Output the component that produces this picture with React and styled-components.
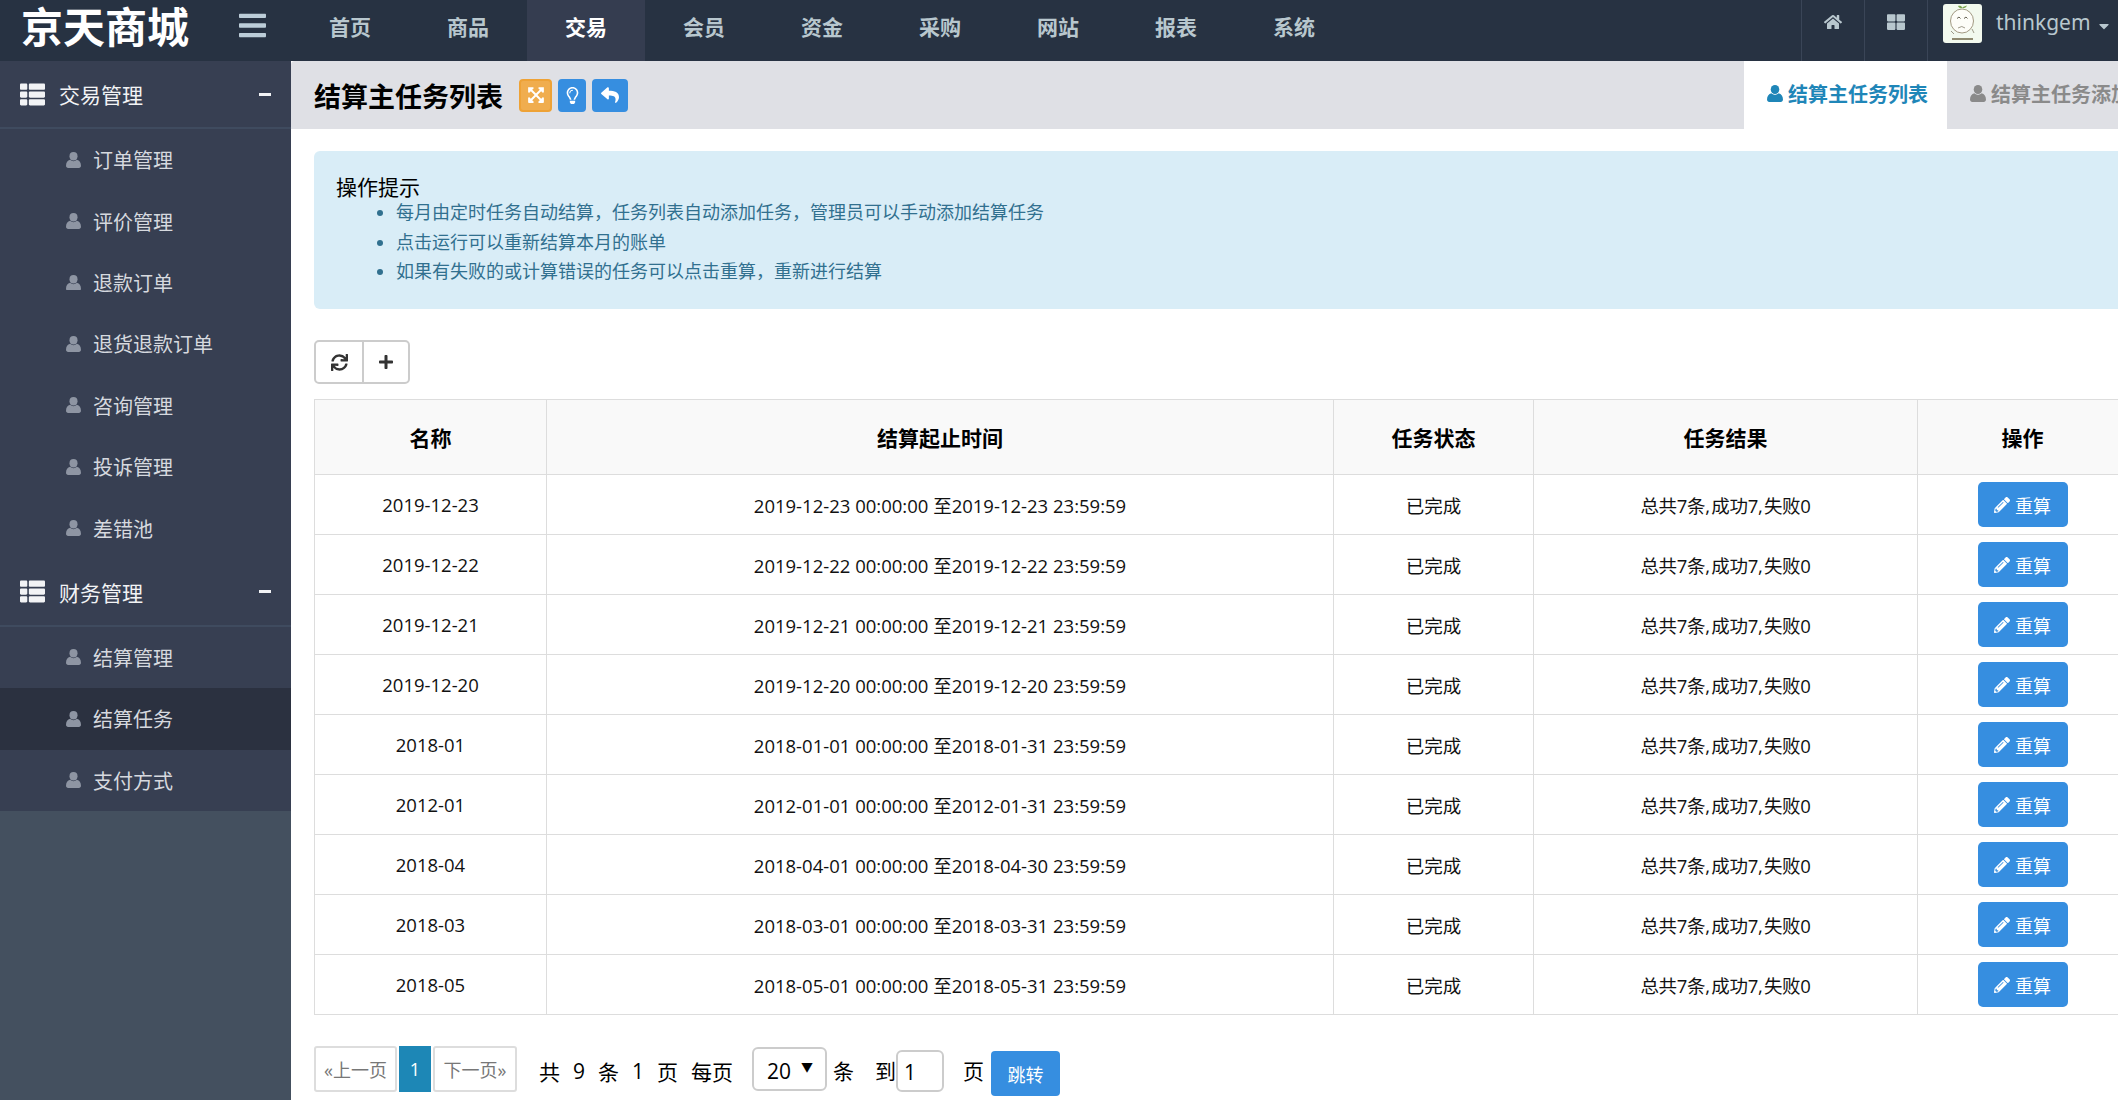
import React from "react";
import styled, { createGlobalStyle } from "styled-components";
import {
    FaBars,
    FaCaretDown,
    FaExpandArrowsAlt,
    FaHome,
    FaPencilAlt,
    FaPlus,
    FaRegLightbulb,
    FaReply,
    FaSync,
    FaThLarge,
    FaThList,
} from "react-icons/fa";

const navItems = ["首页", "商品", "交易", "会员", "资金", "采购", "网站", "报表", "系统"];

const menuGroups = [
    {
        title: "交易管理",
        items: ["订单管理", "评价管理", "退款订单", "退货退款订单", "咨询管理", "投诉管理", "差错池"],
    },
    {
        title: "财务管理",
        items: ["结算管理", "结算任务", "支付方式"],
    },
];

const rows = [
    ["2019-12-23", "2019-12-23 00:00:00 至2019-12-23 23:59:59"],
    ["2019-12-22", "2019-12-22 00:00:00 至2019-12-22 23:59:59"],
    ["2019-12-21", "2019-12-21 00:00:00 至2019-12-21 23:59:59"],
    ["2019-12-20", "2019-12-20 00:00:00 至2019-12-20 23:59:59"],
    ["2018-01", "2018-01-01 00:00:00 至2018-01-31 23:59:59"],
    ["2012-01", "2012-01-01 00:00:00 至2012-01-31 23:59:59"],
    ["2018-04", "2018-04-01 00:00:00 至2018-04-30 23:59:59"],
    ["2018-03", "2018-03-01 00:00:00 至2018-03-31 23:59:59"],
    ["2018-05", "2018-05-01 00:00:00 至2018-05-31 23:59:59"],
];

const tips = [
    "每月由定时任务自动结算，任务列表自动添加任务，管理员可以手动添加结算任务",
    "点击运行可以重新结算本月的账单",
    "如果有失败的或计算错误的任务可以点击重算，重新进行结算",
];

const UserIcon = ({ size = 16 }) => (
    <svg width={size} height={size * 1.06} viewBox="0 0 16 17" fill="currentColor">
        <ellipse cx="8" cy="4.5" rx="4.3" ry="4.5" />
        <path d="M0 14.6C0 11.4 1.6 8.9 4.4 8.3C6.3 10.3 9.7 10.3 11.6 8.3C14.4 8.9 16 11.4 16 14.6C16 16 15 17 13.8 17H2.2C1 17 0 16 0 14.6Z" />
    </svg>
);

const Avatar = () => (
    <svg width="39" height="39" viewBox="0 0 39 39" style={{ borderRadius: 3 }}>
        <rect width="39" height="39" fill="#f2f9ee" />
        <path d="M19 3C18 1.5 16 1.5 15 2C15.5 3.5 17 4.500 19 4C20 2.500 22 2 24 1.500C23.500 3.500 21 4.500 19 4Z" fill="#7aa650" />
        <ellipse cx="19" cy="17" rx="11.500" ry="12" fill="#fdfdf8" stroke="#8a7f64" strokeWidth="0.8" />
        <path d="M14 14.500l2-1.500 1.500 1.500M21 14.500l2-1.500 1.500 1.500" fill="none" stroke="#55503f" strokeWidth="0.9" />
        <path d="M15 24q4-3 7 0M8 27l3 3M29 25l2 4" fill="none" stroke="#77705c" strokeWidth="0.7" />
        <rect x="9" y="34" width="21" height="2" fill="#8f8a70" />
    </svg>
);

const App = () => {
    return (
        <Page>
            <GlobalStyle />
            <TopBar>
                <Brand>
                    <Logo>京天商城</Logo>
                    <BarsIcon />
                </Brand>
                <Nav>
                    {navItems.map((item) => (
                        <NavItem key={item} $active={item === "交易"}>
                            {item}
                        </NavItem>
                    ))}
                </Nav>
                <TopIcon>
                    <FaHome size={18} />
                </TopIcon>
                <TopIcon>
                    <FaThLarge size={18} />
                </TopIcon>
                <UserBox>
                    <Avatar />
                    <UserName>thinkgem</UserName>
                    <FaCaretDown size={16} />
                </UserBox>
            </TopBar>
            <Body>
                <Sidebar>
                    {menuGroups.map((group) => (
                        <div key={group.title}>
                            <GroupHead>
                                <FaThList size={25} />
                                <GroupTitle>{group.title}</GroupTitle>
                                <Minus />
                            </GroupHead>
                            {group.items.map((item) => (
                                <MenuItem key={item} $active={item === "结算任务"}>
                                    <UserIcon size={15} />
                                    <span>{item}</span>
                                </MenuItem>
                            ))}
                        </div>
                    ))}
                    <SidebarRest />
                </Sidebar>
                <Main>
                    <PageHead>
                        <PageTitle>结算主任务列表</PageTitle>
                        <HeadButtons>
                            <HeadButton $color="#f0ad4e" $border="#eea236" $width={33}>
                                <FaExpandArrowsAlt size={18} />
                            </HeadButton>
                            <HeadButton $width={28}>
                                <FaRegLightbulb size={17} />
                            </HeadButton>
                            <HeadButton $width={36}>
                                <FaReply size={18} />
                            </HeadButton>
                        </HeadButtons>
                        <Tabs>
                            <Tab $active>
                                <UserIcon size={16} />
                                结算主任务列表
                            </Tab>
                            <Tab>
                                <UserIcon size={16} />
                                结算主任务添加
                            </Tab>
                        </Tabs>
                    </PageHead>
                    <Content>
                        <Alert>
                            <AlertTitle>操作提示</AlertTitle>
                            <TipList>
                                {tips.map((tip) => (
                                    <li key={tip}>{tip}</li>
                                ))}
                            </TipList>
                        </Alert>
                        <Toolbar>
                            <ToolButton>
                                <FaSync size={17} />
                            </ToolButton>
                            <ToolButton>
                                <FaPlus size={16} />
                            </ToolButton>
                        </Toolbar>
                        <Table>
                            <colgroup>
                                <col style={{ width: 232 }} />
                                <col style={{ width: 787 }} />
                                <col style={{ width: 200 }} />
                                <col style={{ width: 384 }} />
                                <col style={{ width: 210 }} />
                            </colgroup>
                            <thead>
                                <tr>
                                    <th>名称</th>
                                    <th>结算起止时间</th>
                                    <th>任务状态</th>
                                    <th>任务结果</th>
                                    <th>操作</th>
                                </tr>
                            </thead>
                            <tbody>
                                {rows.map(([name, range]) => (
                                    <tr key={name}>
                                        <td>{name}</td>
                                        <td>{range}</td>
                                        <td>已完成</td>
                                        <ResultCell>总共7条, 成功7, 失败0</ResultCell>
                                        <td>
                                            <RedoButton>
                                                <FaPencilAlt size={16} />
                                                重算
                                            </RedoButton>
                                        </td>
                                    </tr>
                                ))}
                            </tbody>
                        </Table>
                        <Pagination>
                            <PageLinks>
                                <PageLink $width={83}>«上一页</PageLink>
                                <PageLink $width={32} $active>
                                    1
                                </PageLink>
                                <PageLink $width={84}>下一页»</PageLink>
                            </PageLinks>
                            <PageInfo>
                                <span>共</span>
                                <span>9</span>
                                <span>条</span>
                                <span>1</span>
                                <span>页</span>
                                <span>每页</span>
                            </PageInfo>
                            <SizeSelect>
                                20
                                <SelectArrow>▼</SelectArrow>
                            </SizeSelect>
                            <PageText $left={6}>条</PageText>
                            <PageText $left={21}>到</PageText>
                            <JumpInput>1</JumpInput>
                            <PageText $left={19}>页</PageText>
                            <JumpButton>跳转</JumpButton>
                        </Pagination>
                    </Content>
                </Main>
            </Body>
        </Page>
    );
};

const fontStack = `"Open Sans", "Noto Sans CJK SC", sans-serif`;

const GlobalStyle = createGlobalStyle`
    * {
        box-sizing: border-box;
    }
    html,
    body {
        margin: 0;
        height: 1100px;
        overflow: hidden;
        background: #fff;
    }
    body {
        font-family: ${fontStack};
        color: #000;
    }
`;

const Page = styled.div`
    width: 2150px;
    height: 1100px;
    display: flex;
    flex-direction: column;
`;

const TopBar = styled.header`
    height: 61px;
    flex-shrink: 0;
    display: flex;
    background: #273242;
    color: #b8c7ce;
`;

const Brand = styled.div`
    width: 291px;
    display: flex;
    align-items: center;
    justify-content: space-between;
    padding: 0 25px 0 21px;
`;

const Logo = styled.div`
    font-size: 42px;
    line-height: 46px;
    font-weight: 700;
    color: #fff;
    margin-top: -8px;
`;

const BarsIcon = styled(FaBars)`
    width: 27px;
    height: 31px;
    color: #bccdd8;
    margin-top: -11px;
`;

const Nav = styled.nav`
    display: flex;
    flex: 1;
`;

const NavItem = styled.div`
    width: 118px;
    display: flex;
    align-items: center;
    justify-content: center;
    font-size: 21px;
    font-weight: 700;
    padding-bottom: 10px;
    color: ${(p) => (p.$active ? "#fff" : "#b8c7ce")};
    background: ${(p) => (p.$active ? "#353d50" : "transparent")};
`;

const TopIcon = styled.div`
    width: 63px;
    border-left: 1px solid #3a4557;
    display: flex;
    justify-content: center;
    padding-top: 13px;
`;

const UserBox = styled.div`
    width: 223px;
    border-left: 1px solid #3a4557;
    display: flex;
    align-items: flex-start;
    padding: 4px 0 0 15px;

    svg:last-child {
        margin: 14px 0 0 5px;
    }
`;

const UserName = styled.span`
    font-family: "Noto Sans", sans-serif;
    font-size: 21px;
    line-height: 36px;
    margin-left: 14px;
`;

const Body = styled.div`
    flex: 1;
    display: flex;
    min-height: 0;
`;

const Sidebar = styled.aside`
    width: 291px;
    flex-shrink: 0;
    display: flex;
    flex-direction: column;
    background: #373f52;
`;

const SidebarRest = styled.div`
    flex: 1;
    background: #44505f;
`;

const GroupHead = styled.div`
    height: 68px;
    display: flex;
    align-items: center;
    padding: 0 20px;
    color: #f2f3f5;
    border-bottom: 2px solid #3f4b5f;
`;

const GroupTitle = styled.span`
    flex: 1;
    font-size: 21px;
    margin-left: 14px;
`;

const Minus = styled.span`
    width: 12px;
    height: 3px;
    background: #f2f3f5;
`;

const MenuItem = styled.div`
    height: 61.4px;
    display: flex;
    align-items: center;
    gap: 12px;
    padding-left: 66px;
    font-size: 20px;
    color: #d6d9df;
    background: ${(p) => (p.$active ? "#2b3140" : "transparent")};

    svg {
        color: #8e95a3;
    }
`;

const Main = styled.main`
    flex: 1;
    min-width: 0;
`;

const PageHead = styled.div`
    height: 68px;
    display: flex;
    align-items: center;
    padding-left: 23px;
    background: #dfe0e5;
    border-top-left-radius: 4px;
`;

const PageTitle = styled.h1`
    margin: 0;
    font-size: 27px;
    font-weight: 700;
`;

const HeadButtons = styled.div`
    display: flex;
    gap: 6px;
    margin-left: 16px;
    flex: 1;
`;

const HeadButton = styled.div`
    width: ${(p) => p.$width}px;
    height: 33px;
    display: flex;
    align-items: center;
    justify-content: center;
    color: #fff;
    background: ${(p) => p.$color || "#368ee0"};
    border: 2px solid ${(p) => p.$border || "#368ee0"};
    border-radius: 4px;
`;

const Tabs = styled.div`
    display: flex;
    align-self: stretch;
`;

const Tab = styled.div`
    width: 203px;
    display: flex;
    align-items: center;
    gap: 5px;
    padding-left: 23px;
    padding-bottom: 3px;
    font-size: 20px;
    font-weight: 700;
    white-space: nowrap;
    color: ${(p) => (p.$active ? "#1f86b8" : "#8a8a8a")};
    background: ${(p) => (p.$active ? "#fff" : "transparent")};
`;

const Content = styled.div`
    padding: 22px 23px 0;
`;

const Alert = styled.div`
    height: 158px;
    padding: 25px 22px 0;
    background: #d9edf7;
    border-radius: 6px;
`;

const AlertTitle = styled.div`
    font-size: 21px;
    line-height: 22px;
`;

const TipList = styled.ul`
    margin: 0;
    padding-left: 60px;
    font-size: 18px;
    line-height: 29.6px;
    color: #31708f;
`;

const Toolbar = styled.div`
    display: flex;
    width: fit-content;
    margin-top: 31px;
    border: 2px solid #ccc;
    border-radius: 5px;
`;

const ToolButton = styled.div`
    width: 46px;
    height: 40px;
    display: flex;
    align-items: center;
    justify-content: center;
    color: #333;

    & + & {
        border-left: 2px solid #ccc;
    }
`;

const Table = styled.table`
    width: 1813px;
    margin-top: 15px;
    table-layout: fixed;
    border-collapse: collapse;
    text-align: center;

    th,
    td {
        padding: 0;
        border: 1px solid #ddd;
    }

    th {
        height: 75px;
        font-size: 21px;
        font-weight: 700;
        background: #f9f9f9;
    }

    td {
        height: 60px;
        font-size: 18.5px;
        color: #111;
    }
`;

const ResultCell = styled.td`
    word-spacing: -3px;
    letter-spacing: -0.3px;
`;

const RedoButton = styled.div`
    width: 90px;
    height: 45px;
    margin: 0 auto;
    display: inline-flex;
    align-items: center;
    justify-content: center;
    gap: 5px;
    font-size: 18px;
    letter-spacing: 0;
    color: #fff;
    background: #368ee0;
    border-radius: 5px;
    vertical-align: middle;
`;

const Pagination = styled.div`
    display: flex;
    align-items: flex-start;
    margin-top: 31px;
`;

const PageLinks = styled.div`
    display: flex;
    gap: 2px;
    height: 46px;
`;

const PageLink = styled.div`
    width: ${(p) => p.$width}px;
    display: flex;
    align-items: center;
    justify-content: center;
    font-size: 18px;
    color: ${(p) => (p.$active ? "#fff" : "#777")};
    background: ${(p) => (p.$active ? "#1d87b6" : "#fff")};
    border: ${(p) => (p.$active ? "none" : "2px solid #ddd")};
    border-radius: ${(p) => (p.$active ? "0" : "3px")};
`;

const PageInfo = styled.div`
    display: flex;
    gap: 13px;
    margin-left: 22px;
    height: 50px;
    align-items: center;
    font-size: 21px;
`;

const SizeSelect = styled.div`
    position: relative;
    width: 75px;
    height: 44px;
    margin: 1px 0 0 19px;
    padding-left: 13px;
    font-size: 21px;
    line-height: 44px;
    border: 2px solid #ccc;
    border-radius: 6px;
`;

const SelectArrow = styled.span`
    position: absolute;
    top: -3px;
    right: 12px;
    font-size: 12px;
`;

const PageText = styled.span`
    margin-left: ${(p) => p.$left}px;
    font-size: 21px;
    line-height: 50px;
`;

const JumpInput = styled.div`
    width: 48px;
    height: 42px;
    margin-top: 4px;
    padding-left: 6px;
    font-size: 21px;
    line-height: 40px;
    border: 2px solid #ccc;
    border-radius: 6px;
`;

const JumpButton = styled.div`
    width: 69px;
    height: 45px;
    margin: 5px 0 0 7px;
    display: flex;
    align-items: center;
    justify-content: center;
    font-size: 18px;
    color: #fff;
    background: #368ee0;
    border-radius: 4px;
`;

export default App;
